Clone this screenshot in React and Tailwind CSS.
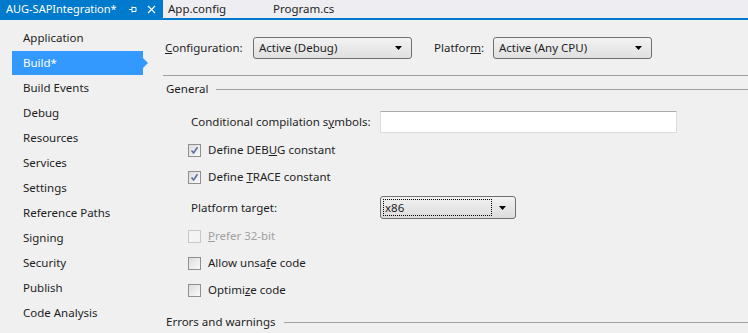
import React from "react";

const navItems = [
  "Application",
  "Build*",
  "Build Events",
  "Debug",
  "Resources",
  "Services",
  "Settings",
  "Reference Paths",
  "Signing",
  "Security",
  "Publish",
  "Code Analysis",
];

function Caret() {
  return (
    <svg width="7" height="4" viewBox="0 0 7 4" className="shrink-0">
      <path d="M0 0h7L3.5 4z" fill="#000" />
    </svg>
  );
}

function Dropdown({ value, className }) {
  return (
    <div
      className={`flex items-center h-[22px] rounded-[3px] border border-[#707070] bg-gradient-to-b from-[#f2f2f2] to-[#e0e0e0] pl-[5px] pr-[9px] ${className}`}
    >
      <span className="flex-1 truncate">{value}</span>
      <Caret />
    </div>
  );
}

function Checkbox({ checked, disabled }) {
  return (
    <div
      className={`w-[13px] h-[13px] shrink-0 border flex items-center justify-center ${
        disabled
          ? "border-[#c8c8c8] bg-[#f4f4f4]"
          : "border-[#8f8f8f] bg-gradient-to-br from-[#dcdcdc] to-[#fafafa]"
      }`}
    >
      {checked && (
        <svg width="9" height="9" viewBox="0 0 9 9">
          <path
            d="M1.5 4.5L3.6 7L7.5 1.2"
            stroke="#5a6fa8"
            strokeWidth="1.6"
            fill="none"
          />
        </svg>
      )}
    </div>
  );
}

function CheckRow({ label, checked, disabled, className }) {
  return (
    <div className={`flex items-center h-[16px] pl-[25px] ${className}`}>
      <Checkbox checked={checked} disabled={disabled} />
      <span className={`ml-[7px] ${disabled ? "text-[#a0a0a0]" : ""}`}>
        {label}
      </span>
    </div>
  );
}

function SectionHeader({ title, className }) {
  return (
    <div className={`flex items-center h-[16px] pl-[3px] ${className}`}>
      <span>{title}</span>
      <div className="flex-1 h-px bg-[#a0a0a0] ml-[8px]" />
    </div>
  );
}

export default function App() {
  return (
    <div
      className="w-[748px] h-[333px] overflow-hidden bg-[#f0f0f0] text-[11.5px] leading-[16px] text-[#1e1e1e] whitespace-nowrap"
      style={{ fontFamily: "'Noto Sans', sans-serif" }}
    >
      {/* Document tabs */}
      <div className="flex h-[18px] bg-[#eeeef2] items-stretch text-[11.5px]">
        <div className="flex items-center w-[163px] shrink-0 bg-[#007acc] text-white pl-[6px]">
          <span className="text-[11px]">AUG-SAPIntegration*</span>
          <svg width="9" height="9" viewBox="0 0 9 9" className="ml-auto">
            <path d="M1 4.5h3M4 1.5v6M4 2.5h4v4H4" stroke="#fff" strokeWidth="1" fill="none" />
          </svg>
          <svg width="9" height="9" viewBox="0 0 9 9" className="ml-[10px] mr-[7px]">
            <path d="M1 1l7 7M8 1l-7 7" stroke="#fff" strokeWidth="1.2" />
          </svg>
        </div>
        <div className="flex items-center pl-[5px] w-[110px] shrink-0">App.config</div>
        <div className="flex items-center">Program.cs</div>
      </div>
      <div className="h-[2px] bg-[#007acc]" />

      <div className="flex">
        {/* Side navigation */}
        <div className="w-[163px] shrink-0 pt-[5px]">
          {navItems.map((item) =>
            item === "Build*" ? (
              <div key={item} className="flex items-center h-[25px] pl-[12px]">
                <div className="flex items-center h-[24px] w-[131px] bg-[#3399ff] text-white pl-[11px]">
                  {item}
                </div>
                <div className="w-0 h-0 border-y-[5px] border-y-transparent border-l-[5px] border-l-[#3399ff]" />
              </div>
            ) : (
              <div key={item} className="flex items-center h-[25px] pl-[23px]">
                {item}
              </div>
            )
          )}
        </div>

        {/* Property page */}
        <div className="flex-1 flex flex-col">
          <div className="flex items-center h-[22px] mt-[17px] pl-[2px]">
            <span className="w-[88px]">
              <u>C</u>onfiguration:
            </span>
            <Dropdown value="Active (Debug)" className="w-[159px]" />
            <span className="ml-[22px] w-[59px]">
              Platfor<u>m</u>:
            </span>
            <Dropdown value="Active (Any CPU)" className="w-[159px]" />
          </div>

          <div className="h-px bg-[#a0a0a0] mt-[16px]" />

          <SectionHeader title="General" className="mt-[5px]" />

          <div className="flex items-center h-[22px] mt-[14px] pl-[28px]">
            <span className="w-[189px]">
              Conditional compilation s<u>y</u>mbols:
            </span>
            <div className="w-[297px] h-[22px] bg-white border border-[#dcdcdc] border-t-[#ababab]" />
          </div>

          <CheckRow
            checked
            className="mt-[9px]"
            label={
              <>
                Define DEB<u>U</u>G constant
              </>
            }
          />
          <CheckRow
            checked
            className="mt-[11px]"
            label={
              <>
                Define <u>T</u>RACE constant
              </>
            }
          />

          <div className="flex items-center h-[23px] mt-[11px] pl-[28px]">
            <span className="w-[189px]">Platform target:</span>
            <div className="flex items-center w-[136px] h-[23px] rounded-[3px] border border-[#707070] bg-gradient-to-b from-[#f2f2f2] to-[#dcdcdc] p-[2px] pr-[9px]">
              <div className="flex-1 h-full border border-dotted border-black flex items-center pl-px leading-none mr-[7px]">
                x86
              </div>
              <Caret />
            </div>
          </div>

          <CheckRow
            disabled
            className="mt-[9px]"
            label={
              <>
                <u>P</u>refer 32-bit
              </>
            }
          />
          <CheckRow
            className="mt-[11px]"
            label={
              <>
                Allow unsa<u>f</u>e code
              </>
            }
          />
          <CheckRow
            className="mt-[11px]"
            label={
              <>
                Optimi<u>z</u>e code
              </>
            }
          />

          <SectionHeader title="Errors and warnings" className="mt-[16px]" />
        </div>
      </div>
    </div>
  );
}
